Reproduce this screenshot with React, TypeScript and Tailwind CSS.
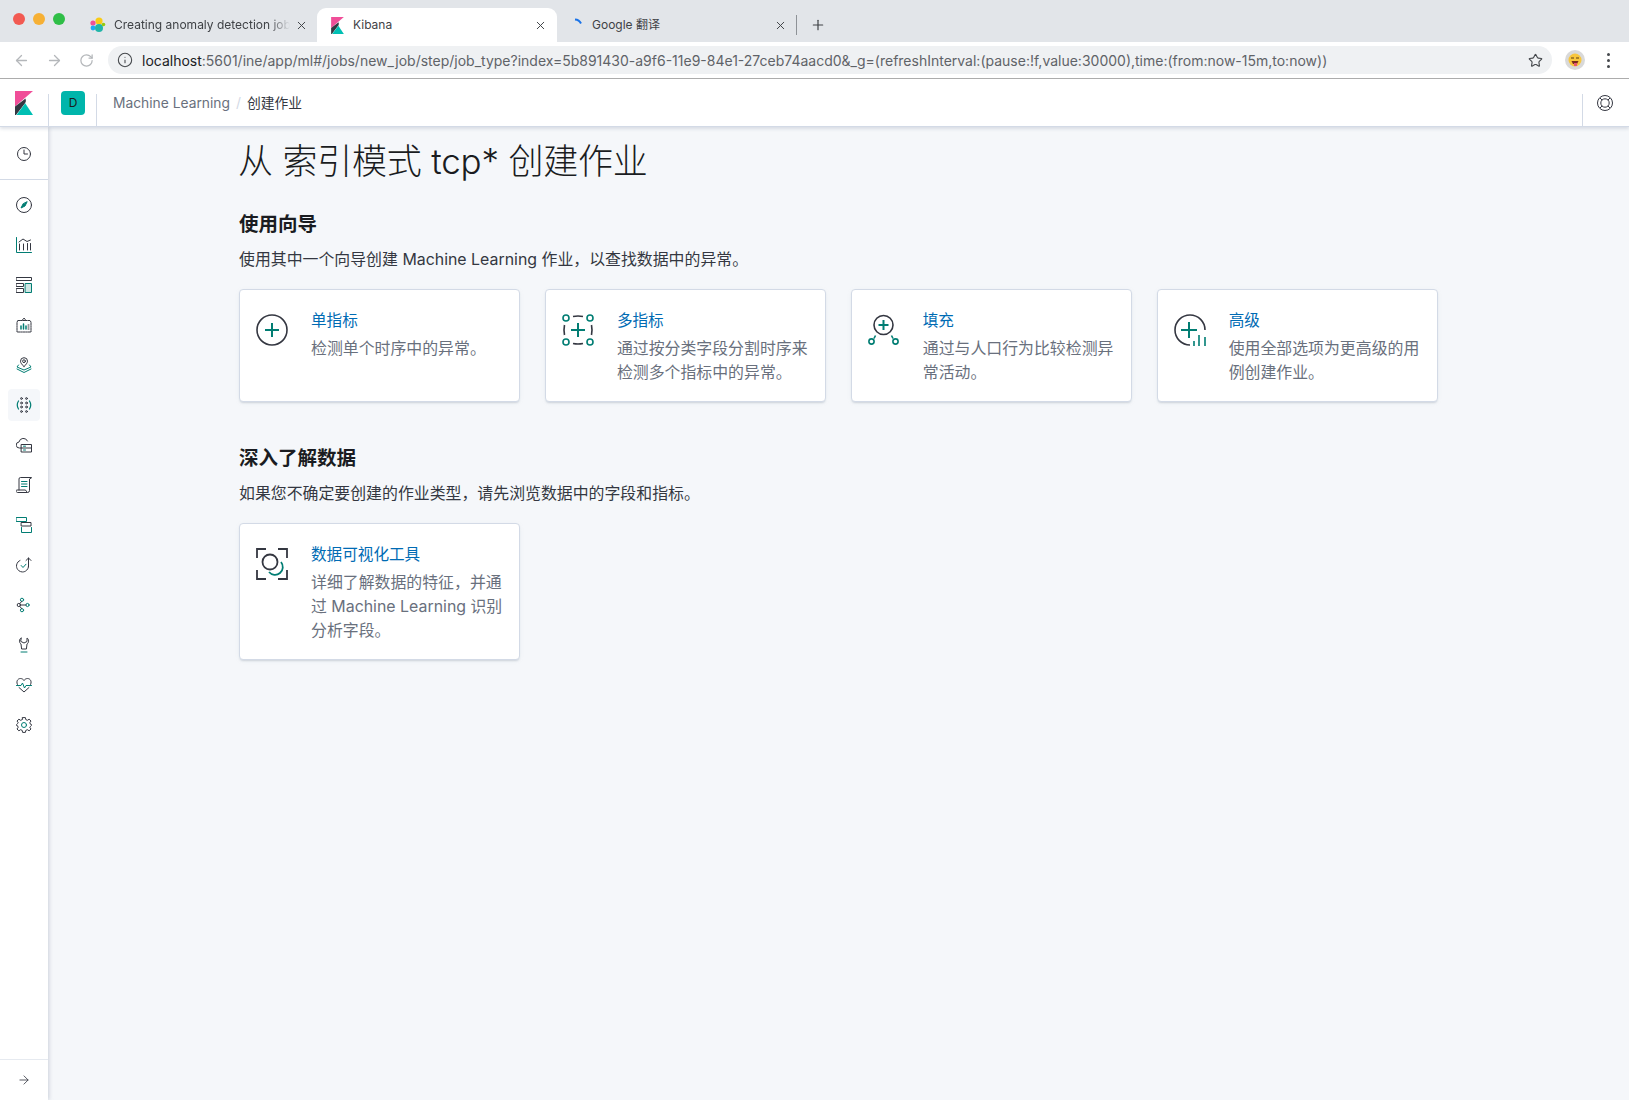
import React from "react";
import { ArrowLeft, ArrowRight, RotateCw, Info, Star, X, Plus } from "lucide-react";

const D = "#343741";
const T = "#017D73";

function KibanaLogo({ w, h }: { w: number; h: number }) {
  return (
    <svg width={w} height={h} viewBox="0 0 18 24" className="shrink-0">
      <path d="M0 0H18L0 15.5Z" fill="#F04E98" />
      <path d="M0 15.5L10.5 7.5Q11.5 10 10.2 12L1 24H0Z" fill="#343741" />
      <path d="M1.5 24L10.2 12.2L18 24Z" fill="#00BFB3" />
    </svg>
  );
}

function Ico({ children }: { children: React.ReactNode }) {
  return (
    <svg width="16" height="16" viewBox="0 0 16 16" fill="none" stroke={D} strokeWidth="1" strokeLinecap="round" strokeLinejoin="round">
      {children}
    </svg>
  );
}

const sideIcons: React.ReactNode[] = [
  <Ico key="c">
    <circle cx="8" cy="8" r="6.5" />
    <path d="M8 4V8H11.5" />
  </Ico>,
  <Ico key="d">
    <circle cx="8" cy="8" r="7.5" />
    <path d="M11 5L9 9L5 11L7 7Z" fill={T} stroke={T} />
  </Ico>,
  <Ico key="v">
    <path d="M0.5 0.5V15.5H15.5" stroke={T} />
    <path d="M3.5 13V7M7.5 13V7M11.5 13V6.5M3 5L7 2L11 4.5L14.5 3" />
    <path d="M14.5 6.5V13" />
  </Ico>,
  <Ico key="b">
    <path d="M0.5 0.5H15.5V3.5H0.5Z" />
    <path d="M0.5 6.5H7.5V9.5H0.5ZM0.5 11.5H7.5V15.5H0.5Z" />
    <path d="M9.5 6.5H15.5V15.5H9.5Z" stroke={T} fill="#cfe6e3" />
  </Ico>,
  <Ico key="cv">
    <path d="M2 3.5H14L15 5V15H1V5Z M6 3.5L8 1L10 3.5" strokeDasharray="1.6 0.9" />
    <path d="M5 12V9M7.5 12V7M10 12V9" stroke={T} strokeWidth="1.5" />
    <path d="M12 8H13M12 10H13M12 12H13" />
  </Ico>,
  <Ico key="m">
    <path d="M8 9.5C6 7.5 4.5 6 4.5 4.2A3.5 3.5 0 0 1 11.5 4.2C11.5 6 10 7.5 8 9.5Z" />
    <circle cx="8" cy="4.2" r="1.4" />
    <path d="M2.5 8L1 10L8 13L15 10L13.5 8M1 12L8 15.5L15 12" stroke={T} />
  </Ico>,
  <Ico key="ml">
    <circle cx="5.5" cy="1.5" r="0.9" /><circle cx="10.5" cy="1.5" r="0.9" />
    <circle cx="5.5" cy="6" r="0.9" /><circle cx="10.5" cy="6" r="0.9" />
    <circle cx="5.5" cy="10" r="0.9" /><circle cx="10.5" cy="10" r="0.9" />
    <circle cx="5.5" cy="14.5" r="0.9" /><circle cx="10.5" cy="14.5" r="0.9" />
    <path d="M2.5 4Q0 8 2.5 12M13.5 4Q16 8 13.5 12" stroke={T} strokeWidth="1.2" />
  </Ico>,
  <Ico key="i">
    <path d="M5 11H3.5A3 3 0 0 1 3 5A4.5 4.5 0 0 1 11.5 4" />
    <path d="M5.5 7.5H15.5V15H5.5ZM5.5 11H15.5" />
    <path d="M7.5 9.2H9.5M7.5 13H9.5" stroke={T} />
  </Ico>,
  <Ico key="l">
    <path d="M3 13V2A1.5 1.5 0 0 1 4.5 0.5H15.5L15 1.5Q14 1 13.5 2V13.5A2 2 0 0 1 11.5 15.5H1.5A1.5 1.5 0 0 1 0.5 13H9.5Q10 14 11 15" />
    <path d="M5.5 4.5H11M5.5 7H11M5.5 9.5H11" stroke={T} />
  </Ico>,
  <Ico key="a">
    <path d="M0.5 0.5H10.5V4.5H0.5Z" stroke={T} />
    <path d="M5.5 5.5H15V9H5.5Z" />
    <path d="M5.5 10.5V15.5H15.5V10.5" stroke={T} />
  </Ico>,
  <Ico key="u">
    <path d="M12.5 9A6 6 0 1 1 4 3.5" strokeDasharray="2.5 0.8" />
    <path d="M5.2 8.5L7 10.5L10 7.2" stroke={T} />
    <path d="M12.5 10V1M10 3.5L12.5 1L15 3.5" />
  </Ico>,
  <Ico key="g">
    <circle cx="6" cy="2.8" r="1.6" stroke={T} />
    <circle cx="6" cy="13.2" r="1.6" stroke={T} />
    <circle cx="11.5" cy="8" r="1.6" stroke={T} />
    <circle cx="2.8" cy="8" r="1.6" />
    <path d="M4.4 8H10M5.5 4.5L4 6.5M5.5 11.5L4 9.5" />
  </Ico>,
  <Ico key="w">
    <path d="M5 1C3 2.2 2.8 5.5 5 7L5.6 12H10.4L11 7C13.2 5.5 13 2.2 11 1V4.5L8 6L5 4.5Z" />
    <path d="M5 15H11" stroke={T} />
  </Ico>,
  <Ico key="h">
    <path d="M2 8.5C-0.5 5 1.5 1.5 4.5 1.5C6 1.5 7.5 2.5 8 3.5C8.5 2.5 10 1.5 11.5 1.5C14.5 1.5 16.5 5 14 8.5M3 10.5L8 15L13 10.5" />
    <path d="M0.5 8.5H5L6.5 6L8.5 11L10 8.5H15.5" stroke={T} />
  </Ico>,
  <Ico key="s">
    <path d="M6.6 0.6H9.4L9.8 2.6L11.4 3.3L13.1 2.2L15 4L13.8 5.7L14.5 7.3L15.5 7.6V8.4L14.5 9.3L13.8 10.3L15 12L13.1 13.8L11.4 12.7L9.8 13.4L9.4 15.4H6.6L6.2 13.4L4.6 12.7L2.9 13.8L1 12L2.2 10.3L1.5 8.7L0.5 8.4V7.6L1.5 6.7L2.2 5.7L1 4L2.9 2.2L4.6 3.3L6.2 2.6Z" />
    <circle cx="8" cy="8" r="2.5" stroke={T} />
  </Ico>,
];

function CardIcon({ kind }: { kind: string }) {
  const s = { fill: "none", stroke: D, strokeWidth: 1.6 } as const;
  const t = { fill: "none", stroke: T, strokeWidth: 1.6 } as const;
  return (
    <svg width="32" height="32" viewBox="0 0 32 32" className="shrink-0">
      {kind === "single" && (
        <>
          <circle cx="16" cy="16" r="15" {...s} />
          <path d="M16 9V23M9 16H23" {...t} strokeWidth="2" />
        </>
      )}
      {kind === "multi" && (
        <>
          <circle cx="4" cy="4" r="3" {...t} /><circle cx="28" cy="4" r="3" {...t} />
          <circle cx="4" cy="28" r="3" {...t} /><circle cx="28" cy="28" r="3" {...t} />
          <path d="M11 2.5Q16 1.5 21 2.5M11 29.5Q16 30.5 21 29.5M2.5 11Q1.5 16 2.5 21M29.5 11Q30.5 16 29.5 21" {...s} strokeWidth="1.6" />
          <path d="M16 9V23M9 16H23" {...t} strokeWidth="2" />
        </>
      )}
      {kind === "pop" && (
        <>
          <circle cx="15.5" cy="11" r="9.5" {...s} />
          <path d="M15.5 6V16M10.5 11H20.5" {...t} strokeWidth="2" />
          <path d="M7.5 21.5L6 24.5M23.5 21.5L25 24.5" {...t} />
          <circle cx="3.5" cy="27.5" r="2.6" {...t} />
          <circle cx="27.5" cy="27.5" r="2.6" {...t} />
        </>
      )}
      {kind === "adv" && (
        <>
          <path d="M31 16A15 15 0 1 0 16 31" {...s} />
          <path d="M15 8V24M7 16H23" {...t} strokeWidth="2" />
          <path d="M20 32V27M25 32V21M31 32V23" {...t} />
        </>
      )}
      {kind === "viz" && (
        <>
          <path d="M10 1H1V10M22 1H31V10M1 22V31H10M31 22V31H22" {...s} strokeWidth="1.8" />
          <circle cx="14" cy="14" r="7.5" {...s} strokeWidth="1.8" />
          <path d="M25 14A7.5 7.5 0 0 1 13 24" {...t} strokeWidth="1.8" />
        </>
      )}
    </svg>
  );
}

function Card({ icon, title, desc }: { icon: string; title: string; desc: string }) {
  return (
    <div className="flex gap-[23px] rounded bg-white border border-[#d3dae6] shadow-[0_2px_2px_-1px_rgba(152,162,179,0.35),0_1px_5px_-2px_rgba(152,162,179,0.35)] pl-4 pr-[14px] pt-[19px] pb-4">
      <div className="pt-[5px]"><CardIcon kind={icon} /></div>
      <div className="min-w-0">
        <div className="text-[#006BB4] text-[15.6px] leading-6 mb-1">{title}</div>
        <div className="text-[#69707D] text-[15.9px] leading-6">{desc}</div>
      </div>
    </div>
  );
}

export default function App() {
  return (
    <div className="h-[1100px] w-[1629px] overflow-hidden flex flex-col bg-[#f5f7fa] font-['Inter','Noto_Sans_CJK_SC',sans-serif]">
      {/* tab strip */}
      <div className="h-[42px] shrink-0 bg-[#e2e5e9] flex items-end text-[12px] text-[#3f4246]">
        <div className="flex items-center gap-[8px] w-[90px] pl-[13px] self-center pb-1">
          <span className="w-3 h-3 rounded-full bg-[#f25a52]" />
          <span className="w-3 h-3 rounded-full bg-[#f6b035]" />
          <span className="w-3 h-3 rounded-full bg-[#2fbe47]" />
        </div>
        <div className="h-[34px] w-[227px] flex items-center">
          <svg width="16" height="16" viewBox="0 0 16 16" className="shrink-0">
            <circle cx="9" cy="4" r="3.6" fill="#F9CB16" />
            <circle cx="3" cy="6" r="2.6" fill="#EF5098" />
            <circle cx="3" cy="11" r="2.4" fill="#1BA9F5" />
            <circle cx="9" cy="11" r="4" fill="#22B5A8" />
            <circle cx="13.5" cy="7.5" r="1.8" fill="#93C90E" />
          </svg>
          <span className="w-[176px] ml-[8px] whitespace-nowrap [mask-image:linear-gradient(90deg,#000_88%,transparent)]">Creating anomaly detection job</span>
          <X size={13} className="ml-[5px] shrink-0" strokeWidth={1.8} />
        </div>
        <div className="h-[34px] w-[240px] bg-white rounded-t-[9px] flex items-center pl-[14px]">
          <KibanaLogo w={13} h={17} />
          <span className="ml-[9px]">Kibana</span>
          <X size={13} className="ml-auto mr-[10px] shrink-0" strokeWidth={1.8} />
        </div>
        <div className="h-[34px] w-[240px] flex items-center pl-[16px]">
          <svg width="12" height="14" viewBox="0 0 12 14" className="shrink-0">
            <path d="M2 1.5A7 7 0 0 1 8 5.5" fill="none" stroke="#1a73e8" strokeWidth="2" />
          </svg>
          <span className="ml-[7px]">Google 翻译</span>
          <X size={13} className="ml-auto mr-[9px] shrink-0" strokeWidth={1.8} />
          <span className="w-px h-5 bg-[#8e9297]" />
        </div>
        <div className="h-[34px] flex items-center pl-[13px]">
          <Plus size={16} strokeWidth={1.8} />
        </div>
      </div>

      {/* toolbar */}
      <div className="h-[37px] shrink-0 bg-white border-b border-[#adadad] flex items-center">
        <div className="w-[108px] flex items-center pl-[13px] gap-[16px] text-[#b4b7ba]">
          <ArrowLeft size={17} strokeWidth={1.8} />
          <ArrowRight size={17} strokeWidth={1.8} />
          <RotateCw size={15} strokeWidth={2} />
        </div>
        <div className="h-[28px] w-[1444px] rounded-full bg-[#eff1f3] flex items-center pl-[9px] pr-[9px]">
          <Info size={16} strokeWidth={1.6} className="text-[#45484c] shrink-0" />
          <span className="ml-[9px] text-[14px] whitespace-nowrap text-[#5f6368]">
            <span className="text-[#202124]">localhost</span>:5601/ine/app/ml#/jobs/new_job/step/job_type?index=5b891430-a9f6-11e9-84e1-27ceb74aacd0&amp;_g=(refreshInterval:(pause:!f,value:30000),time:(from:now-15m,to:now))
          </span>
          <Star size={15} strokeWidth={1.8} className="ml-auto text-[#45484c] shrink-0" />
        </div>
        <div className="ml-[13px] w-5 h-5 rounded-full bg-[#d9d9d9] flex items-center justify-center">
          <svg width="14" height="14" viewBox="0 0 14 14">
            <circle cx="7" cy="7" r="6.5" fill="#f8c63d" />
            <path d="M3 5H6M8 5H11" stroke="#5b3a12" strokeWidth="1.2" />
            <path d="M3.5 8H10.5L9 11H5Z" fill="#7a2a1c" />
            <path d="M6 10H9V13H6Z" fill="#e5566f" />
          </svg>
        </div>
        <div className="ml-[22px] flex flex-col gap-[3px]">
          <span className="w-[3px] h-[3px] rounded-full bg-[#45484c]" />
          <span className="w-[3px] h-[3px] rounded-full bg-[#45484c]" />
          <span className="w-[3px] h-[3px] rounded-full bg-[#45484c]" />
        </div>
      </div>

      {/* kibana header */}
      <div className="h-[48px] shrink-0 bg-white border-b border-[#d3dae6] shadow-[0_2px_3px_rgba(152,162,179,0.3)] flex items-end relative z-10">
        <div className="w-[48px] h-[47px] flex items-center pl-[15px]">
          <KibanaLogo w={18} h={24} />
        </div>
        <div className="h-[32px] border-l border-[#d3dae6] w-[48px] flex items-start pl-3">
          <div className="w-6 h-6 rounded bg-[#00B5AB] text-[#1a1c21] text-[12px] flex items-center justify-center -mt-[3px]">D</div>
        </div>
        <div className="h-[32px] border-l border-[#d3dae6] flex-1 flex items-start pl-4 pt-px text-[13.8px] leading-4">
          <span className="text-[#69707D]">Machine Learning</span>
          <span className="text-[#d3dae6] mx-[6px]">/</span>
          <span className="text-[#343741]">创建作业</span>
        </div>
        <div className="h-[32px] border-l border-[#d3dae6] w-[47px] flex items-start pl-[14px] pt-px">
          <svg width="16" height="16" viewBox="0 0 16 16" fill="none" stroke="#343741" strokeWidth="1">
            <circle cx="8" cy="8" r="7.5" />
            <circle cx="8" cy="8" r="4.2" />
            <path d="M3 3L5 5M13 3L11 5M3 13L5 11M13 13L11 11" />
          </svg>
        </div>
      </div>

      <div className="flex-1 flex min-h-0">
        {/* sidebar */}
        <div className="w-[48px] shrink-0 bg-white shadow-[1px_0_4px_rgba(152,162,179,0.45)] flex flex-col">
          <div className="h-[53px] flex items-center justify-center border-b border-[#d3dae6] pt-[1px] shrink-0">
            {sideIcons[0]}
          </div>
          <div className="flex flex-col pt-[5px]">
            {sideIcons.slice(1).map((ic, i) => (
              <div key={i} className="h-10 flex items-center justify-center relative">
                {i === 5 && <span className="absolute left-2 top-[4px] w-8 h-8 rounded bg-[#f5f7fa]" />}
                <span className="relative flex">{ic}</span>
              </div>
            ))}
          </div>
          <div className="mt-auto h-[41px] border-t border-[#e6eaf0] flex items-center justify-center">
            <ArrowRight size={14} strokeWidth={1.4} className="text-[#343741]" />
          </div>
        </div>

        {/* main */}
        <div className="flex-1 pl-[191px] pr-[191px]">
          <h1 className="text-[35px] font-light leading-[44px] tracking-[-0.2px] text-[#1a1c21] mt-[12px] -ml-px">从 索引模式 tcp* 创建作业</h1>
          <h2 className="text-[19.5px] font-bold leading-7 text-[#1a1c21] mt-[27px]">使用向导</h2>
          <p className="text-[15.9px] leading-6 text-[#343741] mt-[10px]">使用其中一个向导创建 Machine Learning 作业，以查找数据中的异常。</p>
          <div className="grid grid-cols-4 gap-[24.5px] mt-[17px]">
            <Card icon="single" title="单指标" desc="检测单个时序中的异常。" />
            <Card icon="multi" title="多指标" desc="通过按分类字段分割时序来检测多个指标中的异常。" />
            <Card icon="pop" title="填充" desc="通过与人口行为比较检测异常活动。" />
            <Card icon="adv" title="高级" desc="使用全部选项为更高级的用例创建作业。" />
          </div>
          <h2 className="text-[19.5px] font-bold leading-7 text-[#1a1c21] mt-[42px]">深入了解数据</h2>
          <p className="text-[15.9px] leading-6 text-[#343741] mt-[10px]">如果您不确定要创建的作业类型，请先浏览数据中的字段和指标。</p>
          <div className="grid grid-cols-4 gap-[24.5px] mt-[17px]">
            <Card icon="viz" title="数据可视化工具" desc="详细了解数据的特征，并通过 Machine Learning 识别分析字段。" />
          </div>
        </div>
      </div>
    </div>
  );
}
